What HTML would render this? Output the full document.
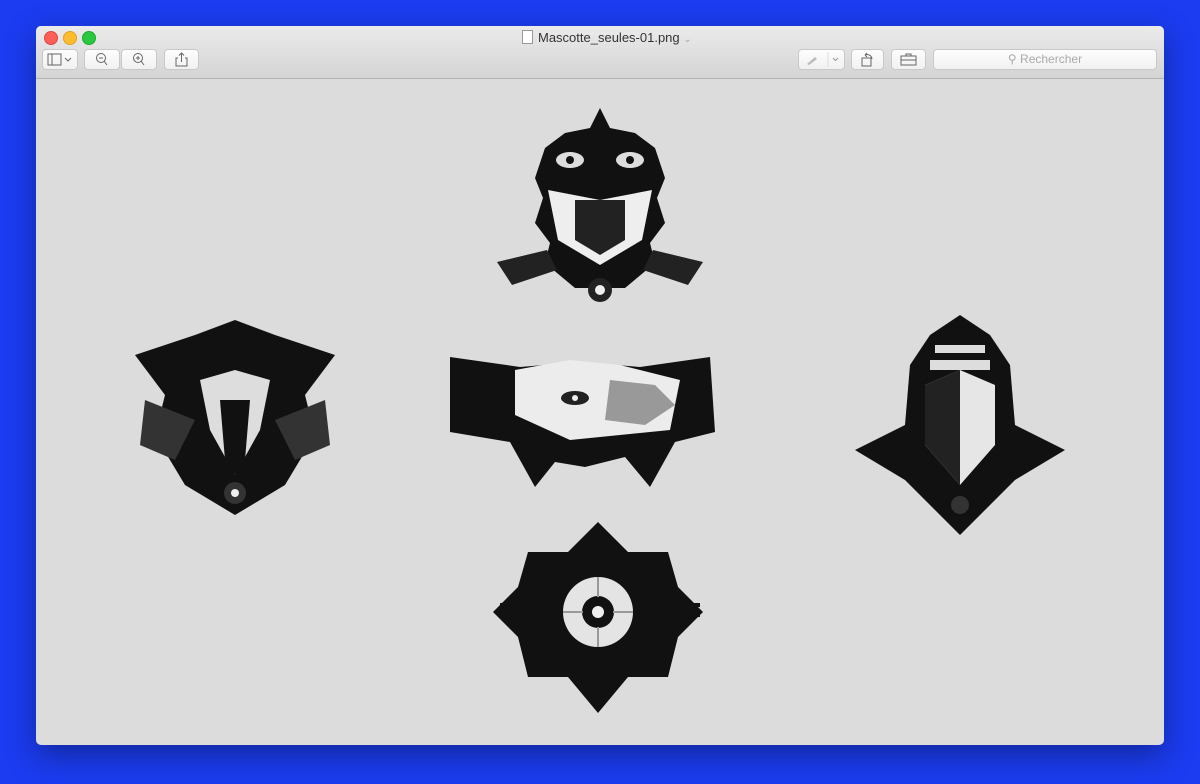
<!DOCTYPE html>
<html><head><style>
body{margin:0;width:1200px;height:784px;background:#1b3cf0;position:relative;overflow:hidden;font-family:"Liberation Sans",sans-serif}
.win{position:absolute;left:36px;top:26px;width:1128px;height:719px;background:#dcdcdc;border-radius:5px;overflow:hidden;box-shadow:0 10px 30px rgba(0,0,0,.35)}
.tb{position:absolute;left:0;top:0;width:100%;height:52px;background:linear-gradient(#ebebeb,#d4d4d4);border-bottom:1px solid #b4b4b4}
.dot{position:absolute;top:5px;width:12px;height:12px;border-radius:50%}
.btn{position:absolute;top:23px;height:21px;background:linear-gradient(#fdfdfd,#f1f1f1);border:1px solid #c8c8c8;border-radius:4px;box-sizing:border-box}
.title{position:absolute;top:4px;left:486px;font-size:13px;color:#333}
</style></head><body>
<div class="win">
<div class="tb">
<div class="dot" style="left:8px;background:#fc5f57;border:0.5px solid #de4640"></div>
<div class="dot" style="left:27px;background:#fdbc2e;border:0.5px solid #dfa123"></div>
<div class="dot" style="left:46px;background:#29c840;border:0.5px solid #1aab29"></div>
<div class="title"><span style="display:inline-block;width:9px;height:12px;border:1px solid #999;background:#fff;vertical-align:-2px;margin-right:5px"></span>Mascotte_seules-01.png <span style="color:#aaa;font-size:10px">⌄</span></div>
<div class="btn" style="left:6px;width:36px"><svg width="34" height="19"><rect x="5" y="4" width="13" height="11" fill="none" stroke="#666"/><line x1="9" y1="4" x2="9" y2="15" stroke="#666"/><path d="M22 8l3 3 3-3" fill="none" stroke="#666"/></svg></div>
<div class="btn" style="left:48px;width:36px"><svg width="34" height="19"><circle cx="16" cy="8" r="4.5" fill="none" stroke="#666"/><line x1="14" y1="8" x2="18" y2="8" stroke="#666"/><line x1="19" y1="11" x2="22" y2="15" stroke="#666"/></svg></div>
<div class="btn" style="left:85px;width:36px"><svg width="34" height="19"><circle cx="16" cy="8" r="4.5" fill="none" stroke="#666"/><line x1="14" y1="8" x2="18" y2="8" stroke="#666"/><line x1="16" y1="6" x2="16" y2="10" stroke="#666"/><line x1="19" y1="11" x2="22" y2="15" stroke="#666"/></svg></div>
<div class="btn" style="left:128px;width:35px"><svg width="33" height="19"><path d="M13 8h-2v8h11v-8h-2M16.5 12V3M14 5.5l2.5-2.5 2.5 2.5" fill="none" stroke="#666"/></svg></div>
<div class="btn" style="left:762px;width:47px"><svg width="45" height="19"><path d="M8 14l8-7 2 2-8 6z" fill="#bbb"/><line x1="29" y1="2" x2="29" y2="17" stroke="#ddd"/><path d="M34 8l2.5 2.5L39 8" fill="none" stroke="#999"/></svg></div>
<div class="btn" style="left:815px;width:33px"><svg width="31" height="19"><rect x="10" y="8" width="9" height="8" fill="none" stroke="#666"/><path d="M13 5a5 5 0 0 1 7 4M13 5l2-2M13 5l2 2" fill="none" stroke="#666"/></svg></div>
<div class="btn" style="left:855px;width:35px"><svg width="33" height="19"><rect x="9" y="6" width="15" height="9" fill="none" stroke="#666"/><path d="M14 6v-2h5v2M9 10h15" fill="none" stroke="#666"/></svg></div>
<div class="btn" style="left:897px;width:224px;font-size:12px;color:#aaa;text-align:center;line-height:19px">&#9906; Rechercher</div>
</div>
<svg style="position:absolute;left:0;top:53px" width="1128" height="666">
<g transform="translate(-36,-79)">
<!-- tiger -->
<path d="M600 108l10 20 25 5 20 15 10 30-8 20 8 25-15 20 5 20-30 25h-50l-30-25 5-20-15-20 8-25-8-20 10-30 20-15 25-5z" fill="#111"/>
<path d="M497 262l50-12 10 20-45 15zM703 262l-50-12-10 20 45 15z" fill="#222"/>
<circle cx="600" cy="290" r="12" fill="#222"/><circle cx="600" cy="290" r="5" fill="#eee"/>
<path d="M548 190l52 10 52-10-10 50-42 25-42-25z" fill="#eee"/>
<path d="M575 200h50v40l-25 15-25-15z" fill="#222"/>
<ellipse cx="570" cy="160" rx="14" ry="8" fill="#ddd"/><ellipse cx="630" cy="160" rx="14" ry="8" fill="#ddd"/>
<circle cx="570" cy="160" r="4" fill="#111"/><circle cx="630" cy="160" r="4" fill="#111"/>
<!-- fox -->
<path d="M135 355l60-20 40-15 40 15 60 20-30 40 10 40-30 50-50 30-50-30-30-50 10-40z" fill="#111"/>
<path d="M145 400l50 20-20 40-35-15zM325 400l-50 20 20 40 35-15z" fill="#333"/>
<path d="M200 380l35-10 35 10-10 50-25 45-25-45z" fill="#ddd"/>
<path d="M220 400h30l-5 60-10 15-10-15z" fill="#111"/>
<circle cx="235" cy="493" r="11" fill="#333"/><circle cx="235" cy="493" r="4" fill="#eee"/>
<!-- hands -->
<path d="M450 357l70 10 60-5 60 5 70-10 5 75-40 10-25 45-25-30-40 10-30-5-20 25-25-45-60-10z" fill="#111"/>
<path d="M515 370l55-10 50 5 60 15-10 50-50 5-50 5-55-25z" fill="#ececec"/>
<ellipse cx="575" cy="398" rx="14" ry="7" fill="#222"/><circle cx="575" cy="398" r="3" fill="#eee"/>
<path d="M610 380l45 5 20 20-30 20-40-5z" fill="#999"/>
<!-- mask -->
<path d="M960 315l30 20 20 30 5 60 50 25-50 30-40 40-15 15-15-15-40-40-50-30 50-25 5-60 20-30z" fill="#111"/>
<path d="M925 385l35-15 35 15v60l-35 40-35-40z" fill="#e6e6e6"/>
<path d="M960 370v115l-35-40v-60z" fill="#222"/>
<path d="M930 360h60v10h-60zM935 345h50v8h-50z" fill="#ddd"/>
<circle cx="960" cy="505" r="9" fill="#333"/>
<!-- flower -->
<path d="M598 522l30 30 40 0 10 35 25 25-25 25-10 40-40 0-30 36-30-36-40 0-10-40-25-25 25-25 10-35 40 0z" fill="#111"/>
<path d="M500 605h200M500 615h200" stroke="#111" stroke-width="4"/>
<circle cx="598" cy="612" r="35" fill="#e4e4e4"/>
<circle cx="598" cy="612" r="16" fill="#111"/><circle cx="598" cy="612" r="6" fill="#eee"/>
<path d="M598 577v20M563 612h20M633 612h-20M598 647v-20" stroke="#999" stroke-width="2"/>
</g></svg>
</div>
</body></html>
